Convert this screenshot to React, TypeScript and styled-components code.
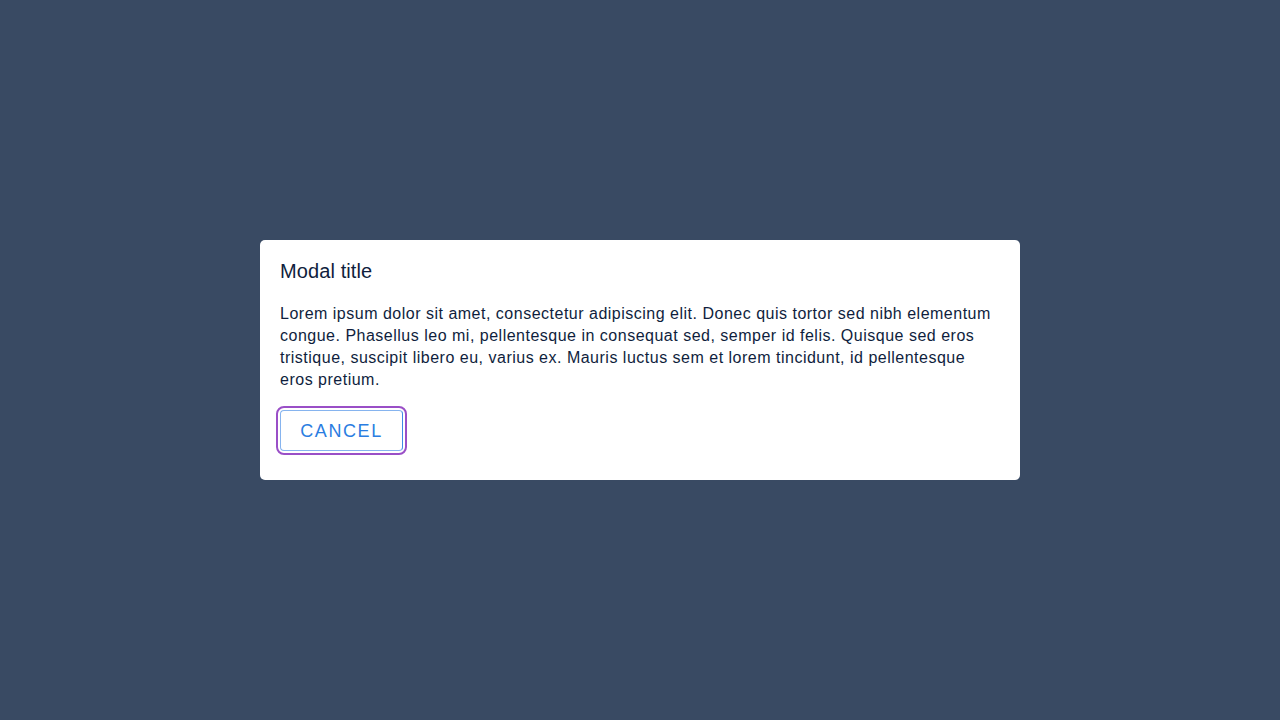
import React from "react";
import styled, { createGlobalStyle } from "styled-components";

const Global = createGlobalStyle`
  html, body { margin: 0; padding: 0; }
  body {
    background: #394a63;
    font-family: "Liberation Sans", Arial, sans-serif;
  }
`;

const Screen = styled.div`
  width: 1280px;
  height: 720px;
  display: flex;
  align-items: center;
  justify-content: center;
`;

const Card = styled.div`
  width: 760px;
  height: 240px;
  box-sizing: border-box;
  background: #ffffff;
  border-radius: 5px;
  padding: 19px 20px 0 20px;
  display: flex;
  flex-direction: column;
  align-items: flex-start;
`;

const Title = styled.h2`
  margin: 0;
  font-size: 20px;
  line-height: 24px;
  font-weight: 400;
  letter-spacing: 0.1px;
  color: #0f1e3d;
`;

const Body = styled.p`
  margin: 20px 0 0 0;
  font-size: 16px;
  line-height: 22px;
  letter-spacing: 0.5px;
  color: #0f1e3d;
`;

const Button = styled.button`
  margin-top: 19px;
  height: 41px;
  width: 123px;
  box-sizing: border-box;
  background: #ffffff;
  border: 1px solid #86b4ef;
  border-right-color: #3f8ae6;
  border-radius: 4px;
  color: #2a7de1;
  font-family: "Liberation Sans", Arial, sans-serif;
  font-size: 18px;
  letter-spacing: 1.6px;
  padding: 1px 0 0 0;
  outline: 2px solid #9a4fc7;
  outline-offset: 2px;
  cursor: pointer;
`;

export default function App() {
  return (
    <>
      <Global />
      <Screen>
        <Card>
          <Title>Modal title</Title>
          <Body>
            Lorem ipsum dolor sit amet, consectetur adipiscing elit. Donec quis tortor sed nibh elementum
            congue. Phasellus leo mi, pellentesque in consequat sed, semper id felis. Quisque sed eros
            tristique, suscipit libero eu, varius ex. Mauris luctus sem et lorem tincidunt, id pellentesque
            eros pretium.
          </Body>
          <Button>CANCEL</Button>
        </Card>
      </Screen>
    </>
  );
}
